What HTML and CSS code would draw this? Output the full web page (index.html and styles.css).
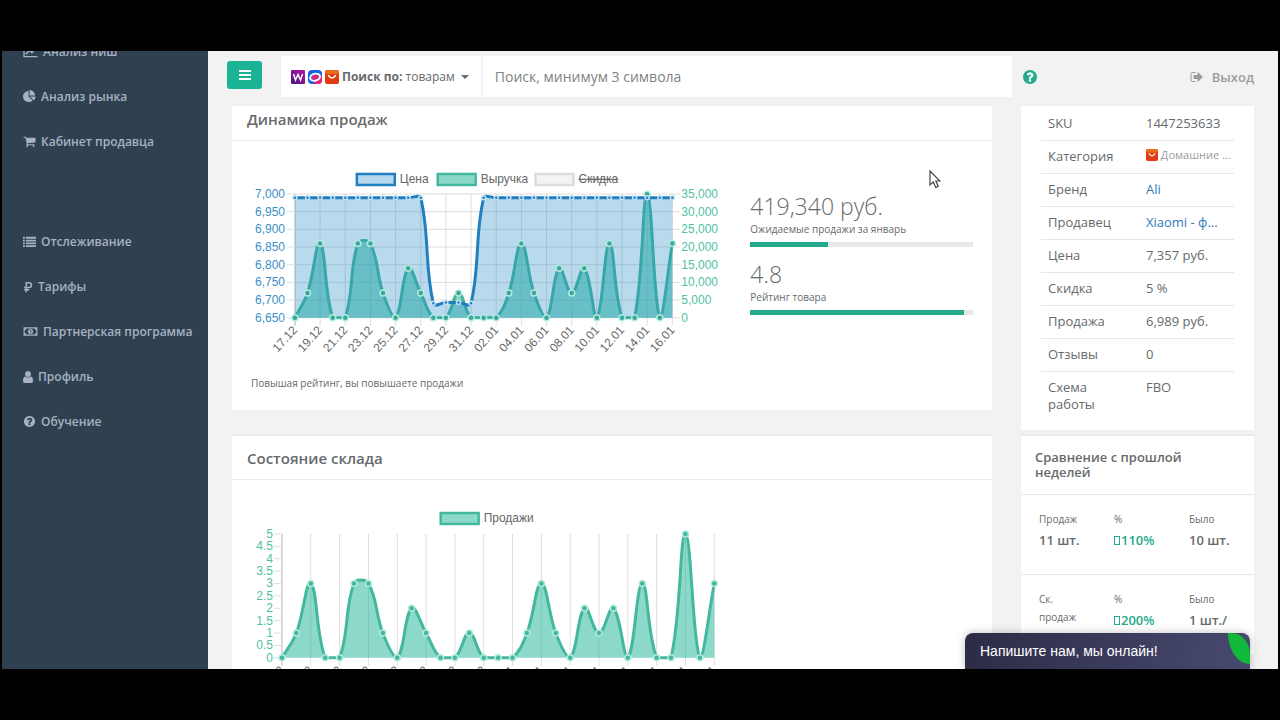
FILE: index.html
```
<!DOCTYPE html>
<html lang="ru">
<head>
<meta charset="utf-8">
<meta name="viewport" content="width=device-width, initial-scale=1">
<title>Динамика продаж</title>
<link rel="stylesheet" href="styles.css">
</head>
<body>
<svg class="defs" aria-hidden="true">
  <symbol id="i-ali" viewBox="0 0 14 14"><rect width="14" height="14" rx="2" fill="#e03a10"/><rect width="14" height="4" rx="2" fill="#f06a1c"/><path d="M3.500 5.500q3.500 5 7 0" fill="none" stroke="#fff" stroke-width="1.400" stroke-linecap="round"/></symbol>
  <symbol id="i-help" viewBox="0 0 1792 1792"><path d="M1024 1376v-192q0-14-9-23t-23-9h-192q-14 0-23 9t-9 23v192q0 14 9 23t23 9h192q14 0 23-9t9-23zm256-672q0-88-55.500-163t-138.500-116-170-41q-243 0-371 213-15 24 8 42l132 100q7 6 19 6 16 0 25-12 53-68 86-92 34-24 86-24 48 0 85.500 26t37.500 59q0 38-20 61t-68 45q-63 28-115.500 86.500t-52.500 125.500v36q0 14 9 23t23 9h192q14 0 23-9t9-23q0-19 21.500-49.500t54.500-49.500q32-18 49-28.500t46-35 44.500-48 28-60.500 12.500-81zm384 192q0 209-103 385.500t-279.500 279.500-385.500 103-385.500-103-279.500-279.500-103-385.500 103-385.500 279.500-279.500 385.500-103 385.500 103 279.500 279.500 103 385.500z"/></symbol>
</svg>
<div class="app">
  <nav class="sidebar" aria-label="Меню">
    <ul class="menu">
      <li><a href="#"><svg class="ico wide" viewBox="0 0 16 14"><path d="M1 1v11.500h14.500" fill="none" stroke="currentColor" stroke-width="1.400"/><path d="M3 10l4-4.500 2.500 2.500L13.500 3.500M10.500 3h3.500v3.500" fill="none" stroke="currentColor" stroke-width="1.800"/></svg>Анализ ниш</a></li>
      <li><a href="#"><svg class="ico" viewBox="0 0 1792 1792"><path d="M768 890l546 546q-106 108-247.500 168t-298.500 60q-209 0-385.500-103t-279.500-279.500-103-385.500 103-385.500 279.500-279.500 385.500-103v762zm187 6h773q0 157-60 298.500t-168 247.500zm709-128h-768v-768q209 0 385.500 103t279.500 279.500 103 385.500z"/></svg>Анализ рынка</a></li>
      <li><a href="#"><svg class="ico" viewBox="0 0 1792 1792"><path d="M704 1536q0 52-38 90t-90 38-90-38-38-90 38-90 90-38 90 38 38 90zm896 0q0 52-38 90t-90 38-90-38-38-90 38-90 90-38 90 38 38 90zm128-1088v512q0 24-16.500 42.500t-40.500 21.500l-1044 122q13 60 13 70 0 16-24 64h920q26 0 45 19t19 45-19 45-45 19h-1024q-26 0-45-19t-19-45q0-11 8-31.500t16-36 21.500-40 15.500-29.500l-177-823h-204q-26 0-45-19t-19-45 19-45 45-19h256q16 0 28.500 6.500t19.500 15.500 13 24.500 8 26 5.500 29.500 4.500 26h1201q26 0 45 19t19 45z"/></svg>Кабинет продавца</a></li>
    </ul>
    <ul class="menu menu-second">
      <li><a href="#"><svg class="ico" viewBox="0 0 14 14"><path d="M0 2h2v2H0zM3 2h11v2H3zM0 5h2v2H0zM3 5h11v2H3zM0 8h2v2H0zM3 8h11v2H3zM0 11h2v2H0zM3 11h11v2H3z"/></svg>Отслеживание</a></li>
      <li><a href="#"><svg class="ico narrow" viewBox="0 0 10 14"><path d="M3 13V2h3.200a2.700 2.700 0 0 1 0 5.600H.5M.5 10.300h6" fill="none" stroke="currentColor" stroke-width="1.800"/></svg>Тарифы</a></li>
      <li><a href="#"><svg class="ico wide" viewBox="0 0 15 14"><path fill-rule="evenodd" d="M0 2.500h15v9H0zM3 3.700A2 2 0 0 1 1.200 5.500v3A2 2 0 0 1 3 10.300h9a2 2 0 0 1 1.800-1.800v-3A2 2 0 0 1 12 3.700z"/><circle cx="7.500" cy="7" r="2.700"/><path d="M6.800 5.700h1v2.800" fill="none" stroke="#2f4050" stroke-width=".9"/></svg>Партнерская программа</a></li>
      <li><a href="#"><svg class="ico narrow" viewBox="256 128 1280 1536"><path d="M1536 1399q0 109-62.500 187t-150.500 78h-854q-88 0-150.500-78t-62.500-187q0-85 8.500-160.500t31.500-152 58.500-131 94-89 134.500-34.500q131 128 313 128t313-128q76 0 134.500 34.500t94 89 58.500 131 31.500 152 8.500 160.500zm-256-887q0 159-112.500 271.500t-271.500 112.500-271.500-112.500-112.500-271.500 112.500-271.500 271.500-112.500 271.500 112.500 112.500 271.500z"/></svg>Профиль</a></li>
      <li><a href="#"><svg class="ico" viewBox="0 0 1792 1792"><use href="#i-help"/></svg>Обучение</a></li>
    </ul>
  </nav>

  <div class="main">
    <header class="topbar">
      <button class="toggle" type="button" aria-label="Свернуть меню"><svg viewBox="0 0 12 10" width="12" height="10"><path d="M0 0h12v2H0zM0 4h12v2H0zM0 8h12v2H0z" fill="#fff"/></svg></button>
      <form class="search">
        <button class="scope" type="button">
          <svg class="logo" viewBox="0 0 14 14"><defs><linearGradient id="wb" x1="0" y1="1" x2="1" y2="0"><stop offset="0" stop-color="#4a1686"/><stop offset="1" stop-color="#b3179b"/></linearGradient></defs><rect width="14" height="14" rx="1" fill="url(#wb)"/><path d="M2.500 4l2 6L7 4.500 9.500 10l2-6" fill="none" stroke="#fff" stroke-width="1.500"/></svg>
          <svg class="logo" viewBox="0 0 14 14"><rect width="14" height="14" rx="4" fill="#1560e8"/><path d="M14 5v5a4 4 0 0 1-4 4H5z" fill="#f0206c"/><ellipse cx="7" cy="7.200" rx="5" ry="3.400" transform="rotate(-15 7 7)" fill="none" stroke="#fff" stroke-width="2"/><ellipse cx="7" cy="7.200" rx="3.600" ry="2" transform="rotate(-15 7 7)" fill="#f0206c"/></svg>
          <svg class="logo"><use href="#i-ali"/></svg>
          <span><b>Поиск по:</b> товарам</span><i class="caret"></i>
        </button>
        <input class="query" type="text" placeholder="Поиск, минимум 3 символа" aria-label="Поиск">
      </form>
      <div class="tools">
        <button class="help" type="button" aria-label="Помощь"><svg viewBox="128 128 1536 1536" width="14" height="14"><circle cx="896" cy="896" r="700" fill="#fff"/><use href="#i-help" width="1792" height="1792"/></svg></button>
        <a class="logout" href="#"><svg viewBox="0 0 1792 1792" width="14" height="14"><path d="M704 1440q0 4 1 20t.5 26.500-3 23.500-10 19.500-20.500 6.500h-320q-119 0-203.500-84.500t-84.500-203.500v-704q0-119 84.500-203.500t203.500-84.500h320q13 0 22.500 9.500t9.500 22.500q0 4 1 20t.5 26.500-3 23.500-10 19.500-20.500 6.500h-320q-66 0-113 47t-47 113v704q0 66 47 113t113 47h312l11.500 1 11.500 3 8 5.500 7 9 2 13.500zm928-544q0 26-19 45l-544 544q-19 19-45 19t-45-19-19-45v-288h-448q-26 0-45-19t-19-45v-384q0-26 19-45t45-19h448v-288q0-26 19-45t45-19 45 19l544 544q19 19 19 45z"/></svg>Выход</a>
      </div>
    </header>

    <div class="columns">
      <main class="left">
        <section class="card">
          <h2 class="card-title card-title-cut">Динамика продаж</h2>
          <div class="card-body">
            <div class="split">
              <svg class="chart" id="sales" viewBox="0 0 470 192" role="img" aria-label="Цена и выручка"></svg>
              <div class="stats">
                <p class="big">419,340 руб.</p>
                <small>Ожидаемые продажи за январь</small>
                <div class="bar"><div style="width:35%"></div></div>
                <p class="big">4.8</p>
                <small>Рейтинг товара</small>
                <div class="bar"><div style="width:96%"></div></div>
              </div>
            </div>
            <small class="note">Повышая рейтинг, вы повышаете продажи</small>
          </div>
        </section>
        <section class="card card-next">
          <h2 class="card-title">Состояние склада</h2>
          <div class="card-body">
            <div class="split">
              <svg class="chart" id="stock" viewBox="0 0 470 192" role="img" aria-label="Продажи"></svg>
            </div>
          </div>
        </section>
      </main>

      <aside class="right">
        <section class="card info">
          <table class="props">
            <tr><th scope="row">SKU</th><td>1447253633</td></tr>
            <tr><th scope="row">Категория</th><td class="category"><svg class="mini"><use href="#i-ali"/></svg> Домашние ...</td></tr>
            <tr><th scope="row">Бренд</th><td><a href="#">Ali</a></td></tr>
            <tr><th scope="row">Продавец</th><td><a href="#">Xiaomi - ф...</a></td></tr>
            <tr><th scope="row">Цена</th><td>7,357 руб.</td></tr>
            <tr><th scope="row">Скидка</th><td>5 %</td></tr>
            <tr><th scope="row">Продажа</th><td>6,989 руб.</td></tr>
            <tr><th scope="row">Отзывы</th><td>0</td></tr>
            <tr><th scope="row">Схема работы</th><td>FBO</td></tr>
          </table>
        </section>
        <section class="card compare">
          <h2 class="compare-title">Сравнение с прошлой неделей</h2>
          <div class="compare-row">
            <div><small>Продаж</small><strong>11 шт.</strong></div>
            <div><small>%</small><strong class="up"><i class="box"></i>110%</strong></div>
            <div><small>Было</small><strong>10 шт.</strong></div>
          </div>
          <div class="compare-row">
            <div><small>Ск. продаж</small></div>
            <div><small>%</small><strong class="up"><i class="box"></i>200%</strong></div>
            <div><small>Было</small><strong>1 шт./ 2 дн.</strong></div>
          </div>
        </section>
      </aside>
    </div>
  </div>

  <button class="chat" type="button">Напишите нам, мы онлайн!<span class="leaf"></span></button>
  <svg class="cursor" viewBox="0 0 12 19" width="12" height="19" aria-hidden="true"><path d="M1 1v14l3.300-3 2.400 5.500 2.500-1.100L6.900 11H11z" fill="#fff" stroke="#444" stroke-width="1.200"/></svg>
</div>
<script src="charts.js"></script>
</body>
</html>
```

FILE: styles.css
```
* { box-sizing: border-box; }
body {
  margin: 0;
  background: #000;
  color: #676a6c;
  font: 13px/18px "Open Sans", "Noto Sans", sans-serif;
}
h2, p, ul { margin: 0; padding: 0; font-weight: 400; }
button { border: 0; padding: 0; font: inherit; color: inherit; cursor: pointer; }
a { color: #337ab7; text-decoration: none; }
.defs { display: block; width: 0; height: 0; }

.app {
  position: relative;
  display: flex;
  height: calc(100vh - 102px);
  margin: 51px 2px;
  overflow: hidden;
  background: #f2f2f3;
}

/* Sidebar */
.sidebar { flex: none; width: 206px; background: #2f4050; }
.menu { list-style: none; margin-top: -22px; }
.menu-second { margin-top: 55px; }
.menu a {
  display: flex;
  align-items: center;
  height: 45px;
  padding-left: 21px;
  color: #a7b1c2;
  font-size: 12px;
  font-weight: 600;
  white-space: nowrap;
}
.ico { width: 13px; height: 13px; margin-right: 5px; fill: currentColor; }
.ico.wide { width: 15px; }
.ico.narrow { width: 10px; height: 12px; }

/* Top bar */
.main { flex: 1; min-width: 0; }
.topbar {
  display: flex;
  align-items: flex-start;
  height: 55px;
  padding: 5px 24px 0 19px;
}
.toggle {
  display: grid;
  place-items: center;
  width: 35px;
  height: 28px;
  margin: 5px 19px 0 0;
  border-radius: 3px;
  background: #1ab394;
}
.search { display: flex; flex: 1; height: 41px; background: #fff; }
.scope {
  display: flex;
  align-items: center;
  gap: 3px;
  padding: 0 12px 0 10px;
  border-right: 2px solid #f2f2f3;
  background: none;
  font-size: 12px;
}
.logo { width: 14px; height: 14px; }
.caret {
  margin-left: 3px;
  border: 4px solid transparent;
  border-top-color: #676a6c;
  border-bottom: 0;
}
.query {
  flex: 1;
  min-width: 0;
  padding: 0 12px;
  border: 0;
  background: none;
  font: 14px "Open Sans", sans-serif;
  color: #676a6c;
}
.query::placeholder { color: #808284; opacity: 1; }
.tools {
  display: flex;
  flex: none;
  justify-content: space-between;
  align-items: center;
  width: 231px;
  height: 41px;
  margin-left: 11px;
}
.help { display: flex; background: none; fill: #23a98b; }
.logout { display: flex; align-items: center; gap: 8px; color: #999c9e; font-weight: 600; fill: #999c9e; }

/* Cards */
.columns {
  display: grid;
  grid-template-columns: minmax(0, 1fr) 233px;
  gap: 29px;
  padding: 0 24px;
}
.card { background: #fff; }
.card-next { margin-top: 24px; border-top: 2px solid #e9ebed; }
.card-title {
  padding: 13px 15px 12px;
  border-bottom: 1px solid #e9ebed;
  font-size: 15px;
  font-weight: 600;
  line-height: 18px;
}
.card-title-cut { padding-top: 4px; }
.card-body { padding: 29px 19px 18px; }
.split { display: grid; grid-template-columns: 65% minmax(0, 1fr); gap: 30px; }
.chart { display: block; width: 100%; height: auto; overflow: visible; }
.chart text { font: 12px "Liberation Sans", Arial, sans-serif; fill: #666; }
small { display: block; font-size: 10px; line-height: 18px; }
.stats { padding-top: 22px; }
.big { font-size: 23px; font-weight: 300; line-height: 28px; }
.bar { height: 5px; margin: 4px 0 13px; background: #e6e8ea; }
.bar div { height: 100%; background: #23a98b; }
.note { margin-top: 12px; }

/* Product properties */
.info { padding: 2px 20px 9px; }
.props { width: 100%; border-collapse: collapse; table-layout: fixed; }
.props th, .props td {
  padding: 7px 7px 8px;
  border-bottom: 1px solid #e5e7e9;
  font-weight: 400;
  line-height: 17px;
  text-align: left;
  vertical-align: top;
  white-space: nowrap;
}
.props th { width: 98px; white-space: normal; }
.props tr:last-child > * { border: 0; }
.props .category { color: #999c9e; font-size: 11px; line-height: 14px; }
.mini { width: 12px; height: 12px; vertical-align: -2px; }

/* Week comparison */
.compare { margin-top: 4px; border-top: 2px solid #e9ebed; }
.compare-title { padding: 14px; font-size: 13px; font-weight: 600; line-height: 15px; }
.compare-row {
  display: grid;
  grid-template-columns: 75px 75px minmax(0, 1fr);
  min-height: 80px;
  padding: 15px 0 0 18px;
  border-top: 1px solid #e5e7e9;
}
.compare-row > div { padding-right: 24px; }
.compare-row strong { display: block; margin-top: 2px; font-weight: 600; line-height: 20px; white-space: nowrap; }
.compare-row:last-child strong { white-space: normal; }
.compare-row .up { color: #23a98b; font-weight: 600; white-space: nowrap; }
.box { display: inline-block; width: 6px; height: 9px; margin-right: 1px; border: 1px solid #23a98b; }

/* Overlays */
.chat {
  position: absolute;
  right: 28px;
  bottom: 0;
  width: 285px;
  height: 36px;
  padding-left: 15px;
  overflow: hidden;
  border-radius: 8px 8px 0 0;
  background: linear-gradient(100deg, #2d2c46, #474a70);
  box-shadow: 0 0 8px rgba(0, 0, 0, .25);
  color: #fff;
  font: 14px "Liberation Sans", Arial, sans-serif;
  text-align: left;
}
.leaf {
  position: absolute;
  top: 0;
  right: 0;
  width: 22px;
  height: 31px;
  border-radius: 0 18px 0 22px / 0 22px 0 31px;
  background: #12b83a;
}
.cursor { position: absolute; left: 927px; top: 119px; }
```

FILE: charts.js
```
const SVG_NS = 'http://www.w3.org/2000/svg';
const units = [0,1,3,0,0,3,3,1,0,2,1,0,0,1,0,0,0,1,3,1,0,2,1,2,0,3,0,0,5,0,3];
const price = units.map((_, i) => i === 11 || i === 14 ? 6691 : i > 11 && i < 14 ? 6693 : 6989);
const labels = units.map((_, i) => {
  const d = new Date(2021, 11, 17 + i);
  return String(d.getDate()).padStart(2, '0') + '.' + String(d.getMonth() + 1).padStart(2, '0');
});

function add(svg, tag, attrs, text) {
  const el = document.createElementNS(SVG_NS, tag);
  for (const key in attrs) el.setAttribute(key, attrs[key]);
  if (text !== undefined) el.textContent = text;
  svg.appendChild(el);
}

function spline(points, box) {
  const clamp = y => Math.min(box.bottom, Math.max(box.top, y));
  const handles = points.map((p, i) => {
    const a = points[i - 1] || p, b = points[i + 1] || p;
    const da = Math.hypot(p.x - a.x, p.y - a.y), db = Math.hypot(b.x - p.x, b.y - p.y);
    const fa = 0.4 * da / (da + db), fb = 0.4 * db / (da + db);
    return {
      inX: p.x - fa * (b.x - a.x), inY: clamp(p.y - fa * (b.y - a.y)),
      outX: p.x + fb * (b.x - a.x), outY: clamp(p.y + fb * (b.y - a.y))
    };
  });
  return points.map((p, i) => {
    if (!i) return `M${p.x} ${p.y}`;
    const o = handles[i - 1], n = handles[i];
    return `C${o.outX} ${o.outY} ${n.inX} ${n.inY} ${p.x} ${p.y}`;
  }).join('');
}

function scale(box, values, min, max) {
  return values.map((v, i) => ({
    x: box.left + (box.right - box.left) * i / (values.length - 1),
    y: box.bottom - (box.bottom - box.top) * (v - min) / (max - min)
  }));
}

function area(svg, box, points, line, fill) {
  const d = spline(points, box);
  add(svg, 'path', { d: `${d}V${box.bottom}H${box.left}Z`, fill });
  add(svg, 'path', { d, fill: 'none', stroke: line, 'stroke-width': 3 });
}

function dots(svg, points, line, ring, r) {
  points.forEach(p => add(svg, 'circle', { cx: p.x, cy: p.y, r, fill: line, stroke: ring, 'stroke-width': 1.5 }));
}

function grid(svg, box, rows, horizontal) {
  for (let i = 0; i <= 30; i += 2) {
    const x = box.left + (box.right - box.left) * i / 30;
    add(svg, 'path', { d: `M${x} ${box.top}V${box.bottom + 8}`, stroke: i ? '#dedede' : '#b5b5b5' });
    add(svg, 'text', { transform: `translate(${x} ${box.bottom + 10}) rotate(-48)`, 'text-anchor': 'end', dy: 4 }, labels[i]);
  }
  for (let i = 0; i <= rows; i++) {
    const y = box.top + (box.bottom - box.top) * i / rows;
    add(svg, 'path', { d: `M${box.left - 8} ${y}H${horizontal ? box.right + 8 : box.left}`, stroke: '#dedede' });
  }
}

function axis(svg, box, ticks, x, anchor, color) {
  ticks.forEach((t, i) => add(svg, 'text', {
    x, y: box.top + (box.bottom - box.top) * i / (ticks.length - 1) + 4, 'text-anchor': anchor, style: `fill:${color}`
  }, t));
}

function legend(svg, x, name, line, fill, off) {
  add(svg, 'rect', { x: x + 2, y: 4, width: 38, height: 11, fill, stroke: line, 'stroke-width': 2.5 });
  add(svg, 'text', { x: x + 45, y: 13, 'text-decoration': off ? 'line-through' : 'none' }, name);
}

const format = v => v.toLocaleString('en-US');
const green = '#43b89d', greenFill = 'rgba(26,179,148,.5)', greenText = '#4fbfa6', greenRing = '#b4ebdf';
const blue = '#1f7fc0', blueFill = 'rgba(28,132,198,.31)', blueRing = '#c4e1f5';

const sales = document.getElementById('sales');
const salesBox = { left: 44, right: 422, top: 24, bottom: 148 };
const revenuePoints = scale(salesBox, units.map(v => v * 6989), 0, 35000);
const pricePoints = scale(salesBox, price, 6650, 7000);
grid(sales, salesBox, 7, true);
area(sales, salesBox, revenuePoints, green, greenFill);
area(sales, salesBox, pricePoints, blue, blueFill);
dots(sales, revenuePoints, '#3aa79a', greenRing, 3);
dots(sales, pricePoints, blue, blueRing, 2);
axis(sales, salesBox, [7000,6950,6900,6850,6800,6750,6700,6650].map(format), 34, 'end', '#3d8fc9');
axis(sales, salesBox, [35000,30000,25000,20000,15000,10000,5000,0].map(format), 431, 'start', greenText);
legend(sales, 104, 'Цена', blue, '#b8d8ee');
legend(sales, 185, 'Выручка', green, '#8cd9c9');
legend(sales, 283, 'Скидка', '#dcdcdc', '#f3f3f3', true);

const stock = document.getElementById('stock');
const stockBox = { left: 31, right: 464, top: 25, bottom: 149 };
const unitPoints = scale(stockBox, units, 0, 5);
grid(stock, stockBox, 10, false);
area(stock, stockBox, unitPoints, green, greenFill);
dots(stock, unitPoints, green, greenRing, 3);
axis(stock, stockBox, ['5','4.5','4','3.5','3','2.5','2','1.5','1','0.5','0'], 22, 'end', greenText);
legend(stock, 188, 'Продажи', green, '#8cd9c9');
```
